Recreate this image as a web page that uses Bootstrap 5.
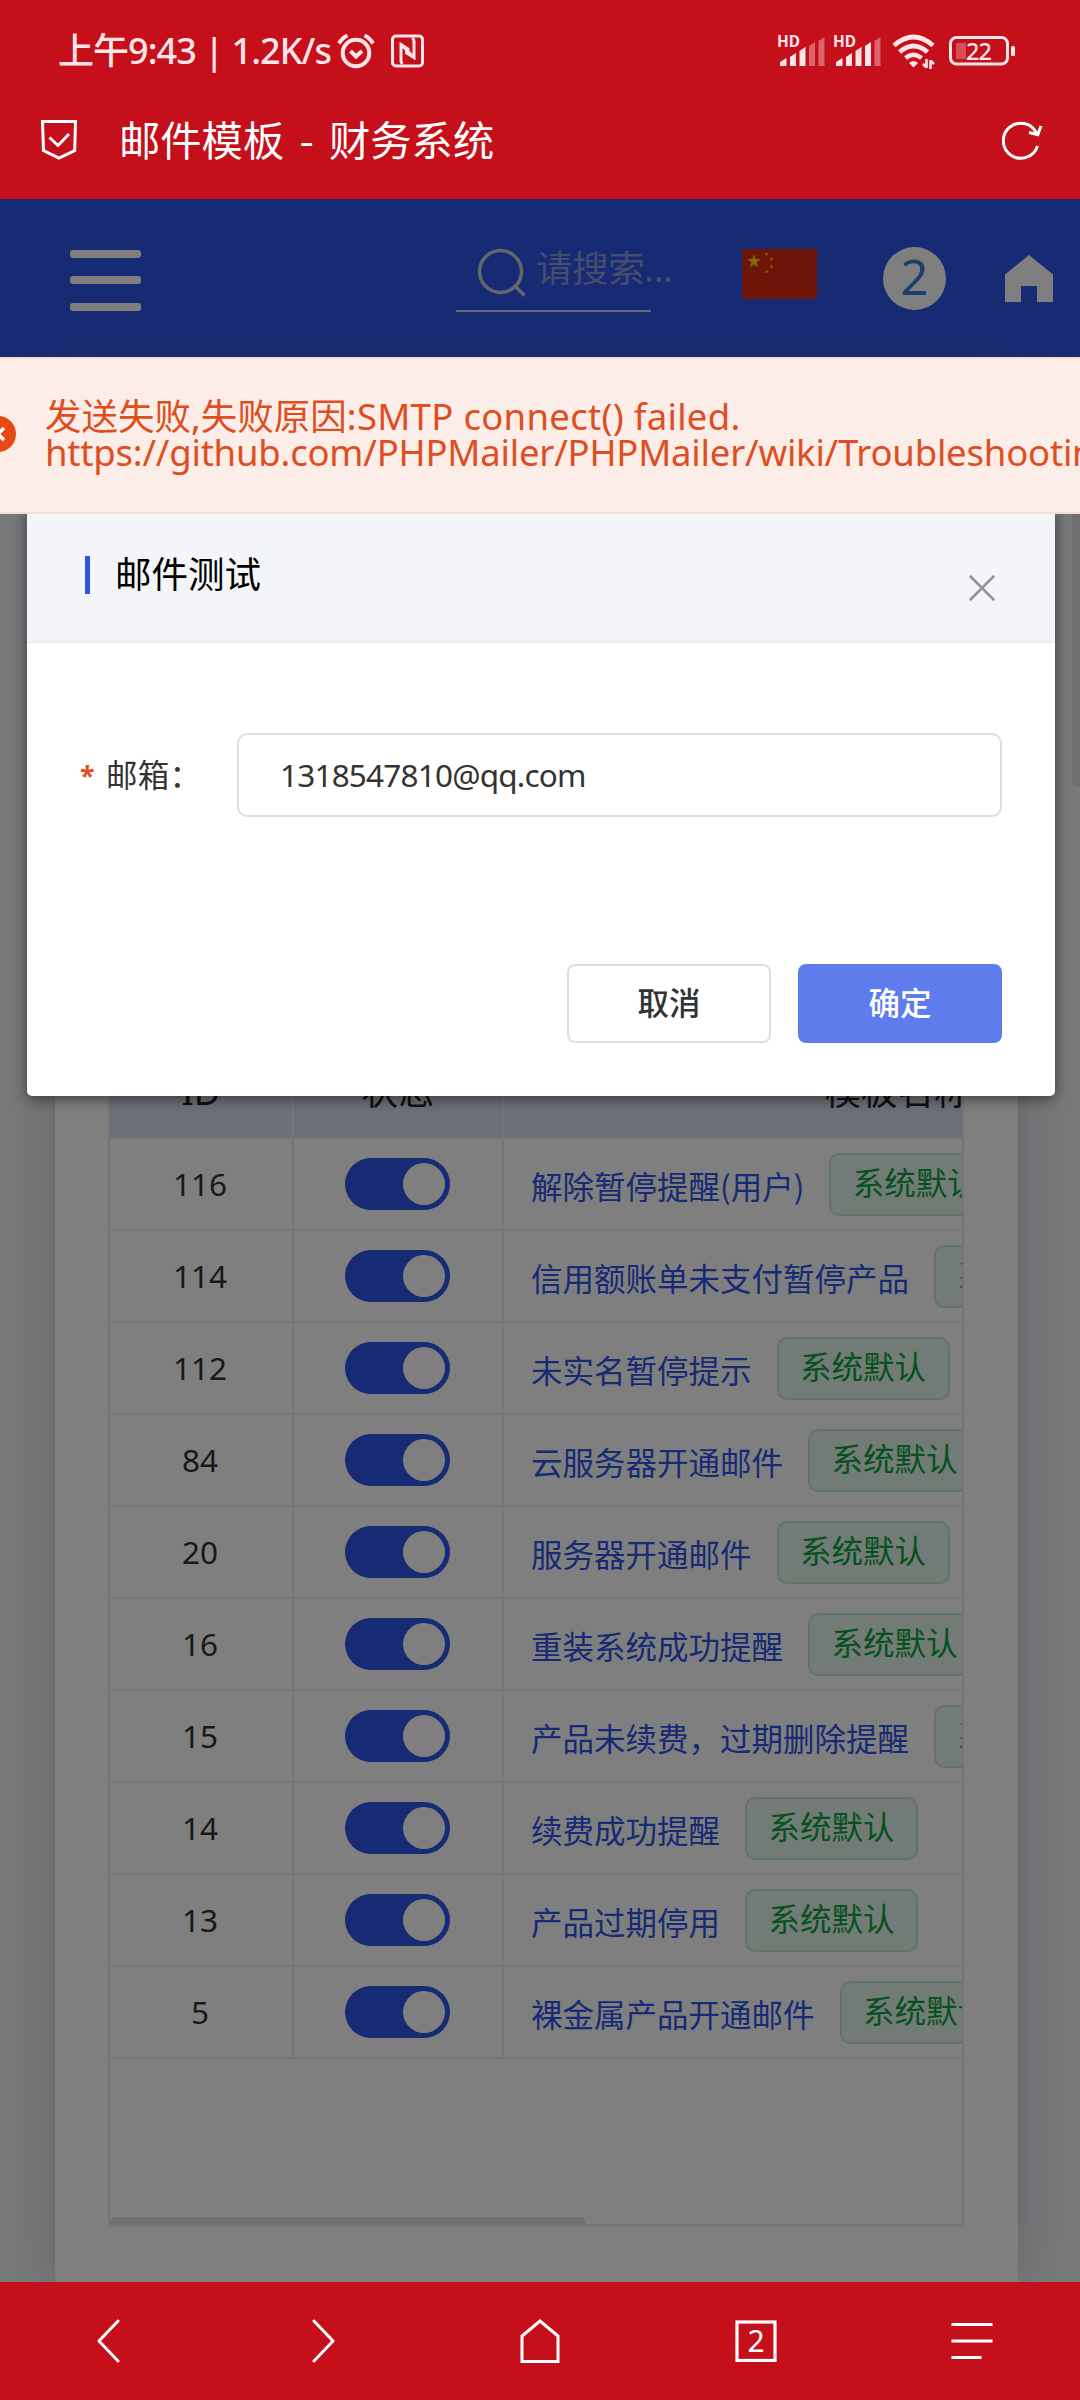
<!DOCTYPE html>
<html lang="zh-CN">
<head>
<meta charset="utf-8">
<meta name="viewport" content="width=device-width, initial-scale=1">
<title>邮件模板 - 财务系统</title>
<link href="https://cdn.jsdelivr.net/npm/bootstrap@5.3.0/dist/css/bootstrap.min.css" rel="stylesheet">
<style>
html,body{width:1080px;height:2400px;overflow:hidden}
body{font-family:"Noto Sans","Noto Sans CJK SC",sans-serif;color:#333;font-size:31.5px;line-height:1.2}
svg{display:block;flex:none}
.phone{width:1080px;height:2400px}
.bar-red{background:#c50f1a;color:#fff}
.status{height:100px;padding:2px 64px 0 58px;color:#ffe4e8}
.clock{width:279px;font-size:36px;font-weight:500;line-height:50px;letter-spacing:-.95px;white-space:pre}
.titlebar{height:99px;padding:0 36px 19px 39px}
.titlebar h1{font-size:41.3px;font-weight:400;margin:-4px auto 0 40px;line-height:60px;font-family:"Noto Sans CJK SC",sans-serif;white-space:pre;word-spacing:6px}
.stage{height:2083px;background:#f0f2f5}
.topnav{height:158px;background:#2e54e8;padding:0 27px 0 70px}
.burger{width:71px;height:61px}
.burger i{height:8px;border-radius:3px;background:#fff}
.searchbox{width:195px;height:67px;margin-left:315px;border-bottom:2px solid #ccd2ea;padding:0 0 10px 19px;color:#8a9ad8;font-size:36.5px;letter-spacing:-.4px;white-space:nowrap}
.searchbox span{margin-left:7px;margin-top:-6px}
.count{width:63px;height:63px;background:#fff;color:#3a7ad8;font-size:49px;margin-left:66px;padding-bottom:3px}
.panel{margin:0 62px 0 55px;height:1925px;background:#fff;padding:688px 55px 0 53px;box-shadow:0 0 50px rgba(90,95,120,.28)}
.grid-wrap{width:856px;height:1182px;border:2px solid #e9ebf5;border-bottom-width:3px}
.mail{table-layout:fixed;width:1183px;border-collapse:separate;border-spacing:0;--bs-table-bg:transparent}
.mail th,.mail td{height:92px;padding:0 27px;border-right:2px solid #e9ebf5;border-bottom:2px solid #e9ebf5;font-weight:400;text-align:center;vertical-align:middle;color:#333;white-space:nowrap}
.mail th{background:#dae0f0;font-size:36.5px;color:#222}
.mail td:last-child{text-align:left}
.mail td:first-child{padding:0 28px 0 26px}
.tpl{color:#2e54e8;text-decoration:none;font-family:"Noto Sans CJK SC",sans-serif;padding-top:3px}
.deftag{height:63px;width:173px;border:2px solid #c4e6d0;border-radius:10px;background:#e4f6ea;color:#0aa23e;padding-bottom:4px;margin-left:25px;font-family:"Noto Sans CJK SC",sans-serif}
.sw{width:105px;height:52px;border-radius:26px;background:#2e54e8;padding:5px;position:relative;left:-1px}
.sw i{width:42px;height:42px;border-radius:50%;background:#fff}
.hscroll{height:7px;width:475px;background:#dedede;border-radius:5px 5px 0 0}
.vscroll{right:0;top:158px;width:8px;height:430px;background:#dedede;border-radius:0 0 0 5px}
.shade{inset:0;background:rgba(0,0,0,.5)}
.dialog{left:27px;top:310px;width:1028px;height:587px;background:#fff;border-radius:5px;box-shadow:0 3px 14px rgba(0,0,0,.5)}
.dialog-head{height:134px;background:#f4f5f8;border-bottom:2px solid #eaedf5;padding:0 60px 0 58px;color:#000;font-size:36.5px}
.dialog-head svg{margin-top:25px}
.accent{width:5px;height:38px;background:#2f54e0;margin-right:25px}
.form-line{padding:90px 53px 0 53px;font-size:31.5px}
.star{color:#e2501f;font-size:27px;font-weight:700;flex:none;width:26px;line-height:30px;margin-top:2px}
.lbl{flex:none;width:131px;font-family:"Noto Sans CJK SC",sans-serif;white-space:nowrap;padding-bottom:3px;letter-spacing:.2px}
.mail-input{height:84px;border:2px solid #dcdee6;border-radius:10px;padding:0 41px 2px;font-size:31.5px;color:#333;letter-spacing:-.8px}
.acts{padding:147px 53px 0;gap:27px}
.acts .btn{width:204px;height:79px;border-radius:8px;font-size:31.5px;font-weight:500;line-height:1;padding:0 0 2px;border:2px solid #dcdee6;color:#333}
.acts .btn-ok{background:#5e7ceb;border-color:#5e7ceb;color:#fff}
.notice{left:0;top:158px;width:1080px;height:157px;background:#fdede8;border-top:2px solid #f8dcd5;border-bottom:2px solid #f8dcd5;color:#de4e20;font-size:36.5px;line-height:36.5px;white-space:nowrap}
.notice svg{margin:-3px 0 0 -20px}
.notice p{margin:-3px 0 0 29px}
.latin{letter-spacing:.3px}
.url{letter-spacing:-.2px}
.footbar{height:118px}
</style>
<script src="https://cdn.jsdelivr.net/npm/bootstrap@5.3.0/dist/js/bootstrap.bundle.min.js"></script>
</head>
<body>
<div class="phone d-flex flex-column overflow-hidden">
  <header class="bar-red">
    <div class="status d-flex align-items-center">
      <span class="clock">上午9:43 | 1.2K/s</span>
      <svg width="38" height="36" viewBox="0 0 38 36" fill="none" stroke="currentColor" stroke-width="4"><circle cx="19" cy="20" r="13.300"/><path d="M13.500 18l5.500 5.500 6-5.500M2 10.500Q5 5 10.500 2.500M36 10.500Q33 5 27.500 2.500"/></svg>
      <svg class="ms-3" width="34" height="36" viewBox="0 0 34 36" fill="none" stroke="currentColor"><rect x="1.500" y="3" width="30" height="30" rx="3.500" stroke-width="3"/><path d="M11.500 31q-1.500-1-1.500-3V11.500l7 4.500v6M21 5q2 1 2 3v16.500L15.500 20v-5M10 11.500l13 13" stroke-width="3"/></svg>
      <svg class="ms-auto" width="238" height="36" viewBox="0 0 238 36" fill="currentColor">
        <g id="sig"><text x="-1" y="14" font-size="16" font-weight="700" font-family="Noto Sans" textLength="23" lengthAdjust="spacingAndGlyphs">HD</text>
        <path d="M2 29l6.500-4v8H2zM12 24l6-4v13h-6zM21.500 18l6-4v19h-6z"/></g>
        <path opacity=".4" d="M31 13l6-4v24h-6zM40.500 8l6-4v29h-6z"/>
        <use href="#sig" x="56"/><path d="M87 13l6-4v24h-6z"/><path opacity=".4" d="M96.500 8l6-4v29h-6z"/>
        <g fill="none" stroke="currentColor" stroke-width="4.600"><path d="M116 12.500Q135.500-4.500 155 12.500M121.500 19Q135.500 7 149.500 19M127.500 25Q135.500 18.500 143.500 25"/></g>
        <path d="M131 30q4.500-4 9 0l-4.500 4.500z"/><path d="M148.500 26v9M145 31l3 3M152.500 36v-9M156 31l-3-3" stroke="currentColor" stroke-width="2.600"/>
        <rect x="172.500" y="4.500" width="57" height="26.500" rx="6" fill="none" stroke="currentColor" stroke-width="3"/><rect x="233" y="13" width="4" height="10" rx="1.500"/><rect x="178" y="10" width="10" height="16" opacity=".3"/>
        <text x="188" y="26.500" font-size="23.500" font-family="Noto Sans" font-weight="500" textLength="26">22</text>
      </svg>
    </div>
    <div class="titlebar d-flex align-items-center">
      <svg width="40" height="42" viewBox="0 0 40 42" fill="none" stroke="#fff" stroke-width="3"><path d="M3.500 2.500h33l-.8 29L20 39 4.500 31.500zM10.500 18.500l8.500 8 11-11.500"/></svg>
      <h1>邮件模板 - 财务系统</h1>
      <svg width="42" height="42" viewBox="0 0 42 42" fill="none" stroke="#fff" stroke-width="3"><path d="M35.500 27A17.500 17.500 0 1 1 34.500 14M27 13.500l8.800 2.200L39 7"/></svg>
    </div>
  </header>

  <main class="stage position-relative overflow-hidden">
    <nav class="topnav d-flex align-items-center">
      <div class="burger d-flex flex-column justify-content-between mt-1"><i></i><i></i><i></i></div>
      <div class="searchbox d-flex align-items-center">
        <svg width="54" height="52" viewBox="0 0 54 52" fill="none" stroke="#cacdd8" stroke-width="3.500"><circle cx="25.500" cy="25.500" r="21"/><path d="M40 40l8.500 8.500" stroke-linecap="round"/></svg>
        <span>请搜索...</span>
      </div>
      <svg style="margin-left:91px" class="mb-2" width="75" height="50" viewBox="0 0 75 50"><path fill="#de2910" d="M0 0h75v50H0z"/><g fill="#ffde00"><path id="star" d="M12 5l1.650 5.100H19l-4.350 3.200 1.700 5.200L12 15.300 7.650 18.500l1.700-5.200L5 10.100h5.350z"/><use href="#star" transform="translate(21,1.500) scale(.29)"/><use href="#star" transform="translate(26,6.500) scale(.29)"/><use href="#star" transform="translate(26,14) scale(.29)"/><use href="#star" transform="translate(21,19) scale(.29)"/></g></svg>
      <div class="count rounded-circle d-flex align-items-center justify-content-center">2</div>
      <svg class="ms-auto" width="48" height="47" viewBox="0 0 48 47" fill="#fff"><path d="M24 0l24 19.500V47H32V31H16v16H0V19.500z"/></svg>
    </nav>
    <section class="panel">
      <div class="grid-wrap d-flex flex-column justify-content-between overflow-hidden">
        <table class="table mail mb-0">
          <colgroup><col style="width:184px"><col style="width:210px"><col style="width:789px"></colgroup>
          <thead><tr><th>ID</th><th>状态</th><th>模板名称</th></tr></thead>
          <tbody id="rows"></tbody>
        </table>
        <div class="hscroll"></div>
      </div>
    </section>
    <div class="vscroll position-absolute"></div>
    <div class="shade position-absolute"></div>

    <div class="dialog position-absolute">
      <div class="dialog-head d-flex align-items-center">
        <div class="accent"></div><span>邮件测试</span>
        <svg class="ms-auto" width="26" height="26" viewBox="0 0 26 26" fill="none" stroke="#929399" stroke-width="2.500" stroke-linecap="round"><path d="M1.500 1.500l23 23M24.500 1.500l-23 23"/></svg>
      </div>
      <div class="form-line d-flex align-items-center">
        <span class="star">*</span><label class="lbl">邮箱：</label>
        <input class="form-control mail-input" type="text" value="1318547810@qq.com">
      </div>
      <div class="acts d-flex justify-content-end">
        <button class="btn">取消</button><button class="btn btn-ok">确定</button>
      </div>
    </div>

    <div class="notice position-absolute d-flex align-items-center overflow-hidden">
      <svg width="36" height="36" viewBox="0 0 36 36"><circle cx="18" cy="18" r="18" fill="#e64a14"/><path d="M12 12l12 12M24 12L12 24" stroke="#fff" stroke-width="3.500"/></svg>
      <p>发送失败,失败原因<span class="latin">:SMTP connect() failed.</span><br><span class="url">https://github.com/PHPMailer/PHPMailer/wiki/Troubleshooting</span></p>
    </div>
  </main>

  <footer class="footbar bar-red d-flex">
    <div class="col d-flex align-items-center justify-content-center"><svg width="24" height="44" viewBox="0 0 24 44" fill="none" stroke="#fff" stroke-width="3" stroke-linecap="round" stroke-linejoin="round"><path d="M22 2L3 22l19 20"/></svg></div>
    <div class="col d-flex align-items-center justify-content-center"><svg width="24" height="44" viewBox="0 0 24 44" fill="none" stroke="#fff" stroke-width="3" stroke-linecap="round" stroke-linejoin="round"><path d="M2 2l19 20L2 42"/></svg></div>
    <div class="col d-flex align-items-center justify-content-center"><svg width="42" height="46" viewBox="0 0 42 46" fill="none" stroke="#fff" stroke-width="3"><path d="M3 43.500V18L21 3l18 15v25.500z"/></svg></div>
    <div class="col d-flex align-items-center justify-content-center"><svg width="42" height="42" viewBox="0 0 42 42"><rect x="2" y="2" width="38" height="38.500" fill="none" stroke="#fff" stroke-width="3.200"/><text x="21" y="32" font-size="30" text-anchor="middle" fill="#fff" font-family="Noto Sans">2</text></svg></div>
    <div class="col d-flex align-items-center justify-content-center"><svg width="42" height="40" viewBox="0 0 42 40" fill="none" stroke="#fff" stroke-width="3"><path d="M.5 3.500h41M.5 20h41M.5 36.500h30"/></svg></div>
  </footer>
</div>
<script>
const templates=[[116,'解除暂停提醒(用户)'],[114,'信用额账单未支付暂停产品'],[112,'未实名暂停提示'],[84,'云服务器开通邮件'],[20,'服务器开通邮件'],[16,'重装系统成功提醒'],[15,'产品未续费，过期删除提醒'],[14,'续费成功提醒'],[13,'产品过期停用'],[5,'裸金属产品开通邮件']];
document.getElementById('rows').innerHTML=templates.map(([id,name])=>`<tr><td>${id}</td><td><div class="sw d-flex justify-content-end mx-auto"><i></i></div></td><td><div class="d-flex align-items-center"><a class="tpl">${name}</a><span class="deftag d-flex align-items-center justify-content-center">系统默认</span></div></td></tr>`).join('');
</script>
</body>
</html>
